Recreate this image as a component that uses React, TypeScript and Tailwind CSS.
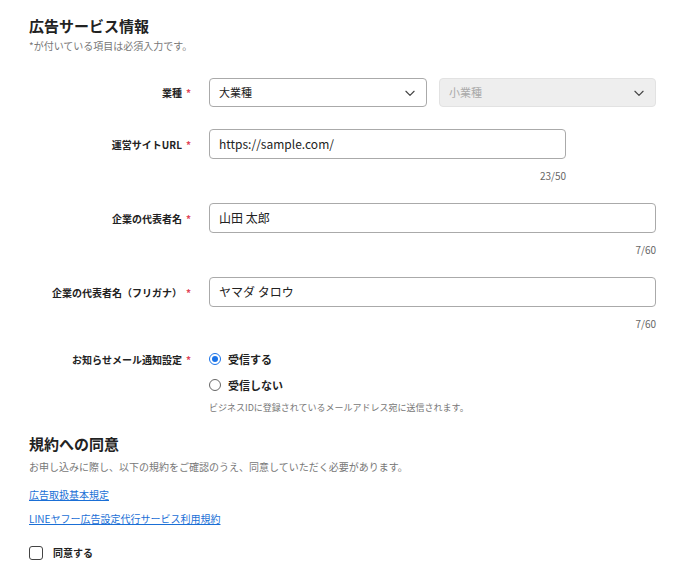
import React from "react";

const Chevron = () => (
  <svg width="14" height="14" viewBox="0 0 24 24" fill="none" stroke="#444" strokeWidth="2" strokeLinecap="round" strokeLinejoin="round">
    <path d="M5 9l7 7 7-7" />
  </svg>
);

const Label = ({ children }: { children: React.ReactNode }) => (
  <div className="w-[166px] shrink-0 text-right pr-[4px] text-[10px] font-bold text-[#222] whitespace-nowrap">
    {children}
    <span className="text-[#e0455a] ml-[4px]">*</span>
  </div>
);

export default function App() {
  return (
    <div className="bg-white w-[674px] h-[570px] pl-[29px] pt-[16px] text-[#222]" style={{ fontFamily: '"Noto Sans CJK JP", "Noto Sans", sans-serif' }}>
      <h2 className="text-[15px] font-bold leading-[20px]">広告サービス情報</h2>
      <p className="text-[10px] text-[#777] leading-[14px] mt-[3px]">*が付いている項目は必須入力です。</p>

      <div className="flex items-center gap-[14px] mt-[25px]">
        <Label>業種</Label>
        <div className="flex gap-[12px]">
          <div className="w-[218px] h-[29px] border border-[#aaa] rounded-[4px] flex items-center justify-between px-[9px] text-[11px]">
            大業種<Chevron />
          </div>
          <div className="w-[217px] h-[29px] border border-[#e2e2e2] bg-[#eeeeee] rounded-[4px] flex items-center justify-between px-[9px] text-[11px] text-[#aaa]">
            小業種<Chevron />
          </div>
        </div>
      </div>

      <div className="flex items-center gap-[14px] mt-[22px]">
        <Label>運営サイトURL</Label>
        <div className="w-[357px] h-[30px] border border-[#aaa] rounded-[4px] flex items-center px-[9px] text-[12px]">https://sample.com/</div>
      </div>
      <div className="w-[537px] text-right text-[10px] text-[#666] mt-[10px] leading-[14px]">23/50</div>

      <div className="flex items-center gap-[14px] mt-[20px]">
        <Label>企業の代表者名</Label>
        <div className="w-[447px] h-[30px] border border-[#aaa] rounded-[4px] flex items-center px-[9px] text-[12px]">山田 太郎</div>
      </div>
      <div className="w-[627px] text-right text-[10px] text-[#666] mt-[10px] leading-[14px]">7/60</div>

      <div className="flex items-center gap-[14px] mt-[20px]">
        <Label>企業の代表者名（フリガナ）</Label>
        <div className="w-[447px] h-[30px] border border-[#aaa] rounded-[4px] flex items-center px-[9px] text-[12px]">ヤマダ タロウ</div>
      </div>
      <div className="w-[627px] text-right text-[10px] text-[#666] mt-[10px] leading-[14px]">7/60</div>

      <div className="flex gap-[14px] mt-[21px]">
        <Label>お知らせメール通知設定</Label>
        <div className="flex flex-col">
          <div className="flex items-center gap-[7px] text-[11px] font-bold h-[14px]">
            <span className="w-[12px] h-[12px] rounded-full border border-[#1a73e8] flex items-center justify-center">
              <span className="w-[6px] h-[6px] rounded-full bg-[#1a73e8]" />
            </span>
            受信する
          </div>
          <div className="flex items-center gap-[7px] text-[11px] font-bold h-[14px] mt-[12px]">
            <span className="w-[12px] h-[12px] rounded-full border border-[#666]" />
            受信しない
          </div>
          <p className="text-[9px] text-[#777] mt-[10px] leading-[12px]">ビジネスIDに登録されているメールアドレス宛に送信されます。</p>
        </div>
      </div>

      <h2 className="text-[15px] font-bold leading-[20px] mt-[20px]">規約への同意</h2>
      <p className="text-[10px] text-[#777] leading-[14px] mt-[6px]">お申し込みに際し、以下の規約をご確認のうえ、同意していただく必要があります。</p>
      <div className="mt-[14px] text-[10px] leading-[14px]">
        <a className="text-[#1a6fd6] underline">広告取扱基本規定</a>
      </div>
      <div className="mt-[10px] text-[10px] leading-[14px]">
        <a className="text-[#1a6fd6] underline">LINEヤフー広告設定代行サービス利用規約</a>
      </div>
      <div className="flex items-center gap-[10px] mt-[19px] text-[10px] font-bold">
        <span className="w-[14px] h-[14px] border border-[#444] rounded-[3px]" />
        同意する
      </div>
    </div>
  );
}
